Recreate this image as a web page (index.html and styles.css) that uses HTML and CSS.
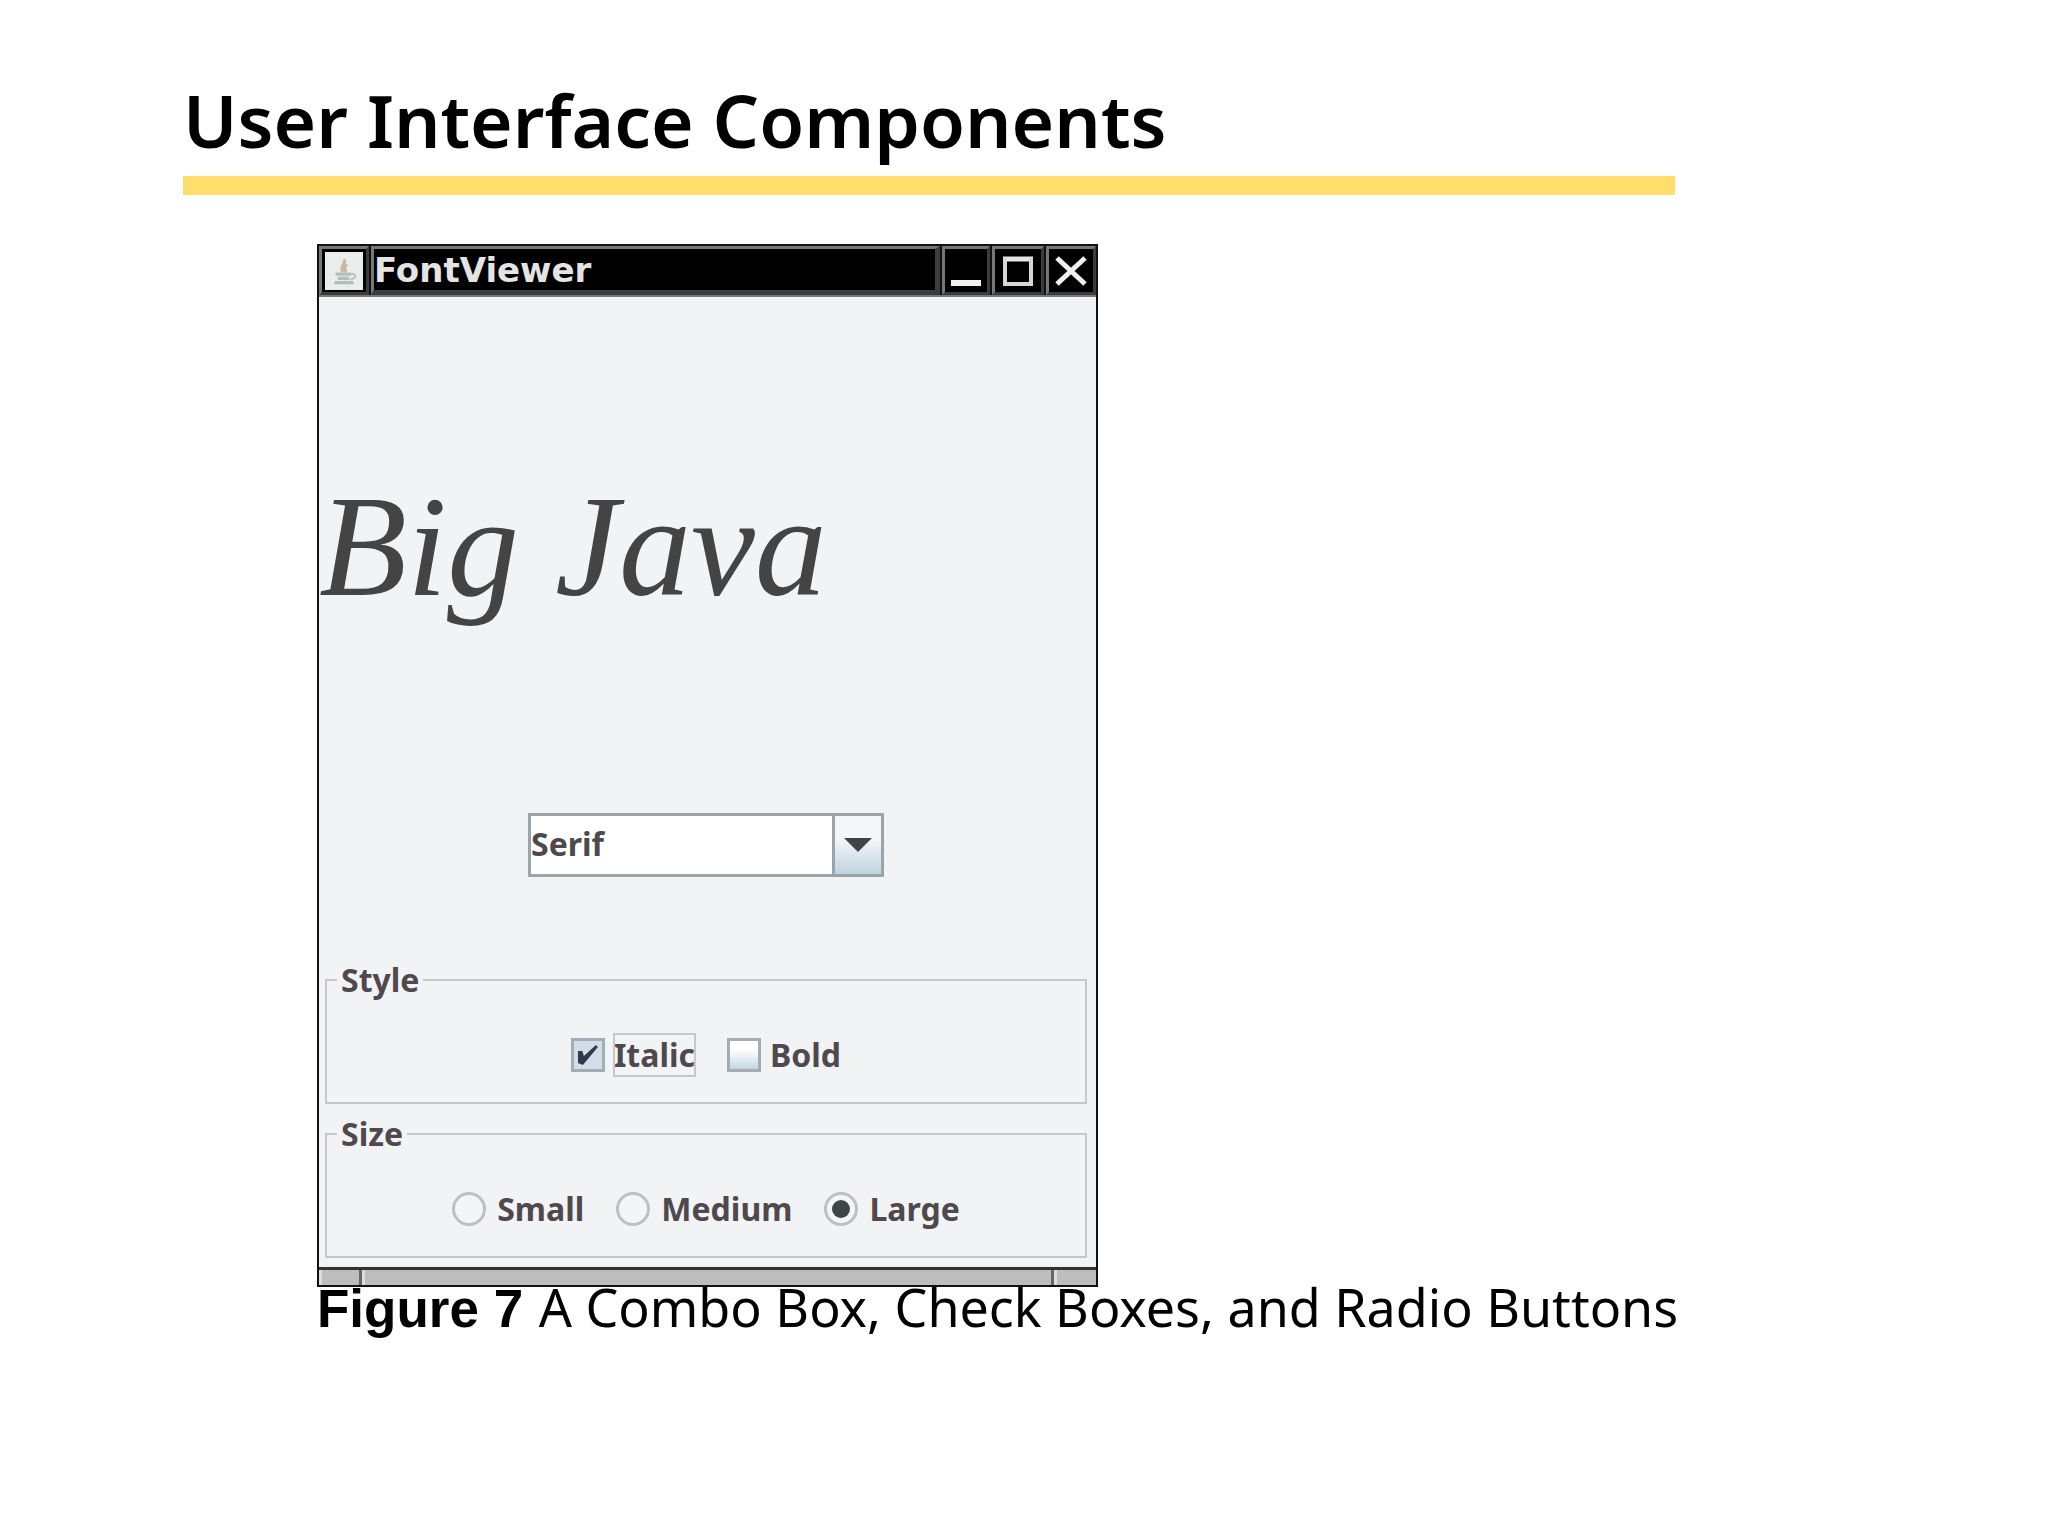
FILE: index.html
```
<!DOCTYPE html>
<html lang="en">
  <head>
    <meta charset="UTF-8">
    <title>User Interface Components</title>
    <link rel="stylesheet" href="styles.css">
  </head>
  <body>
    <header class="slide-header">
      <h1>User Interface Components</h1>
    </header>
    <figure class="slide-figure">
      <form class="window">
        <div class="titlebar">
          <button type="button" class="cell" aria-label="Window menu">
            <svg width="38" height="38" viewBox="0 0 36 36">
              <rect width="36" height="36" fill="#e9eeeb"/>
              <path d="M18 7c3 4-5 6-1 12M21 12c-3 2-3 4-1 7" fill="none" stroke="#c9b9a4" stroke-width="3"/>
              <path d="M10 21h15M12 25h11M9 29h18" fill="none" stroke="#b4bdbd" stroke-width="3"/>
              <path d="M25 21c5-1 5 4-1 5" fill="none" stroke="#b8c0c0" stroke-width="2"/>
            </svg>
          </button>
          <div class="cell window-title">FontViewer</div>
          <button type="button" class="cell" aria-label="Minimize">
            <svg width="32" height="32" viewBox="0 0 32 32"><path d="M1 28h30" stroke="#f0f0f0" stroke-width="6"/></svg>
          </button>
          <button type="button" class="cell" aria-label="Maximize">
            <svg width="32" height="32" viewBox="0 0 32 32"><path d="M1 4h30" stroke="#e6e6e6" stroke-width="5"/><path d="M3 3v26h26V3" fill="none" stroke="#d6d6d6" stroke-width="4"/></svg>
          </button>
          <button type="button" class="cell" aria-label="Close">
            <svg width="32" height="32" viewBox="0 0 32 32"><path d="M2 3l28 26M30 3L2 29" stroke="#f0f0f0" stroke-width="5"/></svg>
          </button>
        </div>
        <div class="content">
          <div class="preview">Big Java</div>
          <div class="combo">
            <select aria-label="Font">
              <option>Serif</option>
              <option>SansSerif</option>
              <option>Monospaced</option>
            </select>
            <svg class="arrow" width="28" height="14" viewBox="0 0 28 14"><path d="M0 0h28L14 14z" fill="#3f4448"/></svg>
          </div>
          <fieldset>
            <legend>Style</legend>
            <div class="options">
              <label><input type="checkbox" checked><span class="focused">Italic</span></label>
              <label><input type="checkbox"><span>Bold</span></label>
            </div>
          </fieldset>
          <fieldset>
            <legend>Size</legend>
            <div class="options">
              <label><input type="radio" name="size"><span>Small</span></label>
              <label><input type="radio" name="size"><span>Medium</span></label>
              <label><input type="radio" name="size" checked><span>Large</span></label>
            </div>
          </fieldset>
        </div>
        <div class="resize-bar"><span></span><span></span><span></span></div>
      </form>
      <figcaption><b>Figure 7</b> A Combo Box, Check Boxes, and Radio Buttons</figcaption>
    </figure>
  </body>
</html>
```
FILE: styles.css
```
* {
box-sizing: border-box;
}
body {
margin: 0;
padding: 80px 373px 80px 183px;
background-color: #fff;
color: #000;
font-family: "Noto Sans", "Open Sans", sans-serif;
}
h1 {
margin: 0;
font-size: 73px;
font-weight: 600;
line-height: 80px;
}
.slide-header {
padding-bottom: 16px;
border-bottom: 19px solid #ffde6b;
}
.slide-figure {
margin: 49px 0 0 134px;
}
.window {
max-width: 781px;
border: 2px solid #111;
background-color: #f2f3f5;
color: #4f484c;
font-size: 32px;
font-weight: 700;
}

/* title bar */
.titlebar {
display: grid;
grid-template-columns: 50px 1fr 48px 52px 50px;
gap: 2px;
height: 51px;
background-color: #111;
border-bottom: 2px solid #777;
}
.cell {
display: flex;
align-items: center;
justify-content: center;
margin: 0;
padding: 0;
border: 3px solid #3c3c3c;
border-top-color: #777;
border-left-color: #777;
background-color: #000;
}
.cell.window-title {
justify-content: flex-start;
border-right-width: 5px;
border-bottom-width: 5px;
color: #e4e4e4;
font: bold 34px/40px "DejaVu Sans", sans-serif;
}

/* content */
.content {
padding: 0 9px 9px 6px;
}
.preview {
height: 500px;
margin-left: -6px;
line-height: 500px;
white-space: nowrap;
color: #444;
font-family: "Liberation Serif", serif;
font-size: 144px;
font-style: italic;
font-weight: 400;
}
.combo {
position: relative;
width: 356px;
margin: 16px auto 83px;
}
select {
display: block;
width: 100%;
height: 64px;
padding: 0 0 4px;
appearance: none;
border: 3px solid #9aa4ab;
border-radius: 0;
background: linear-gradient(#9aa4ab, #9aa4ab) right 46px top / 3px 100% no-repeat,
linear-gradient(#f4f6f8 40%, #bfd3e0) right / 46px 100% no-repeat,
#fff;
color: inherit;
font: inherit;
}
.arrow {
position: absolute;
top: 25px;
right: 12px;
pointer-events: none;
}
fieldset {
margin: 0 0 10px;
padding: 34px 0 26px;
border: 2px solid #c4c8ca;
}
fieldset:last-child {
margin-bottom: 0;
}
legend {
margin-left: 10px;
padding: 0 4px;
line-height: 40px;
}
.options {
display: flex;
justify-content: center;
gap: 32px;
}
label {
display: flex;
align-items: center;
gap: 9px;
line-height: 42px;
}
input {
flex: none;
width: 34px;
height: 34px;
margin: 0;
appearance: none;
border: 3px solid #a3adb6;
background: linear-gradient(#fff 30%, #c5d7e3);
}
input[type="radio"] {
margin-right: 2px;
border-color: #b9c0c6;
border-radius: 50%;
background: #f4f5f7;
}
input[type="checkbox"]:checked {
background: #d3dde8;
}
input[type="checkbox"]:checked::after {
content: "";
display: block;
width: 20px;
height: 20px;
margin: 4px;
background-color: #2f3a4d;
clip-path: polygon(0 30%, 22% 30%, 30% 55%, 90% 0, 100% 10%, 25% 100%, 0 90%);
}
input[type="radio"]:checked::after {
content: "";
display: block;
width: 18px;
height: 18px;
margin: 5px;
border-radius: 50%;
background-color: #3f4448;
}
.focused {
outline: 2px solid #c4c8cb;
outline-offset: -1px;
}

/* bottom frame */
.resize-bar {
display: grid;
grid-template-columns: 40px 1fr 42px;
gap: 3px;
height: 18px;
border-top: 3px solid #333;
background-color: #666;
}
.resize-bar span {
border-left: 3px solid #ddd;
background-color: #bdbdbd;
}
figcaption {
font-size: 52px;
line-height: 40px;
white-space: nowrap;
}
figcaption b {
margin-right: 2px;
font-family: "Liberation Sans", sans-serif;
font-size: 53px;
}
```
